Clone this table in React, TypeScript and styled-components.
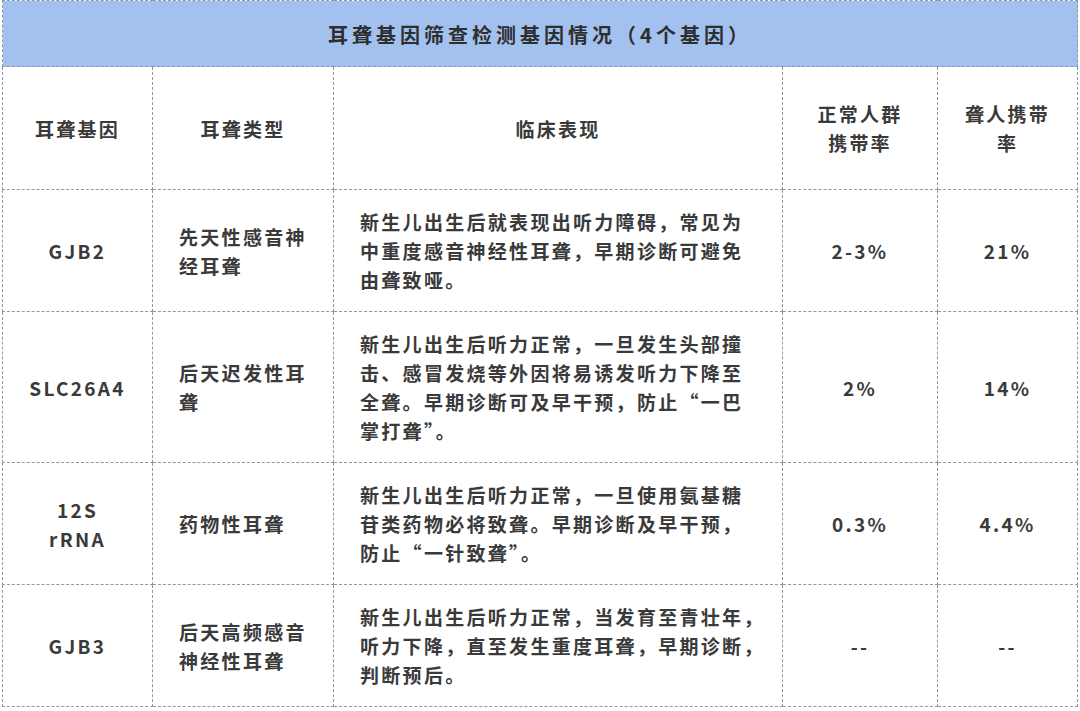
import React from "react";
import styled, { createGlobalStyle } from "styled-components";

const Global = createGlobalStyle`
  html, body { margin: 0; padding: 0; background: #ffffff; }
  body { font-family: "Noto Sans CJK SC", "Noto Sans", sans-serif; color: #3a3a3a; }
`;

const Page = styled.div`
  padding: 0 0 0 2px;
`;

const Table = styled.table`
  width: 1075px;
  border-collapse: collapse;
  table-layout: fixed;
`;

const TitleCell = styled.th`
  box-sizing: border-box;
  height: 66px;
  background: #a3c1ef;
  border: 1px dashed #8f98aa;
  font-size: 20px;
  font-weight: 700;
  letter-spacing: 4px;
  color: #2e2e2e;
  text-align: center;
  vertical-align: middle;
  padding: 2px 0 0 0;
`;

const HeadCell = styled.th`
  box-sizing: border-box;
  height: 123px;
  border: 1px dashed #8f98aa;
  font-size: 19px;
  font-weight: 700;
  letter-spacing: 2.2px;
  line-height: 29px;
  color: #3a3a3a;
  text-align: center;
  vertical-align: middle;
  padding: 0 26px;
`;

const Cell = styled.td<{ $align?: "left" | "center" }>`
  box-sizing: border-box;
  height: 122px;
  border: 1px dashed #8f98aa;
  font-size: 19px;
  font-weight: 600;
  letter-spacing: 2.3px;
  line-height: 29px;
  color: #3a3a3a;
  text-align: ${(p) => p.$align ?? "center"};
  vertical-align: middle;
  padding: 17px 26px;
`;

const Line = styled.span`
  display: block;
  white-space: nowrap;
`;

const rows = [
  {
    gene: "GJB2",
    type: "先天性感音神经耳聋",
    desc: ["新生儿出生后就表现出听力障碍，常见为", "中重度感音神经性耳聋，早期诊断可避免", "由聋致哑。"],
    normal: "2-3%",
    deaf: "21%",
  },
  {
    gene: "SLC26A4",
    type: "后天迟发性耳聋",
    desc: [
      "新生儿出生后听力正常，一旦发生头部撞",
      "击、感冒发烧等外因将易诱发听力下降至",
      "全聋。早期诊断可及早干预，防止“一巴",
      "掌打聋”。",
    ],
    normal: "2%",
    deaf: "14%",
  },
  {
    gene: "12S rRNA",
    type: "药物性耳聋",
    desc: ["新生儿出生后听力正常，一旦使用氨基糖", "苷类药物必将致聋。早期诊断及早干预，", "防止“一针致聋”。"],
    normal: "0.3%",
    deaf: "4.4%",
  },
  {
    gene: "GJB3",
    type: "后天高频感音神经性耳聋",
    desc: ["新生儿出生后听力正常，当发育至青壮年，", "听力下降，直至发生重度耳聋，早期诊断，", "判断预后。"],
    normal: "--",
    deaf: "--",
  },
];

export default function App() {
  return (
    <Page>
      <Global />
      <Table>
        <colgroup>
          <col style={{ width: 150 }} />
          <col style={{ width: 181 }} />
          <col style={{ width: 449 }} />
          <col style={{ width: 155 }} />
          <col style={{ width: 140 }} />
        </colgroup>
        <thead>
          <tr>
            <TitleCell colSpan={5}>耳聋基因筛查检测基因情况（4个基因）</TitleCell>
          </tr>
          <tr>
            <HeadCell>耳聋基因</HeadCell>
            <HeadCell>耳聋类型</HeadCell>
            <HeadCell>临床表现</HeadCell>
            <HeadCell>正常人群携带率</HeadCell>
            <HeadCell>聋人携带率</HeadCell>
          </tr>
        </thead>
        <tbody>
          {rows.map((r) => (
            <tr key={r.gene}>
              <Cell>{r.gene}</Cell>
              <Cell $align="left">{r.type}</Cell>
              <Cell $align="left">
                {r.desc.map((l, i) => (
                  <Line key={i}>{l}</Line>
                ))}
              </Cell>
              <Cell>{r.normal}</Cell>
              <Cell>{r.deaf}</Cell>
            </tr>
          ))}
        </tbody>
      </Table>
    </Page>
  );
}
